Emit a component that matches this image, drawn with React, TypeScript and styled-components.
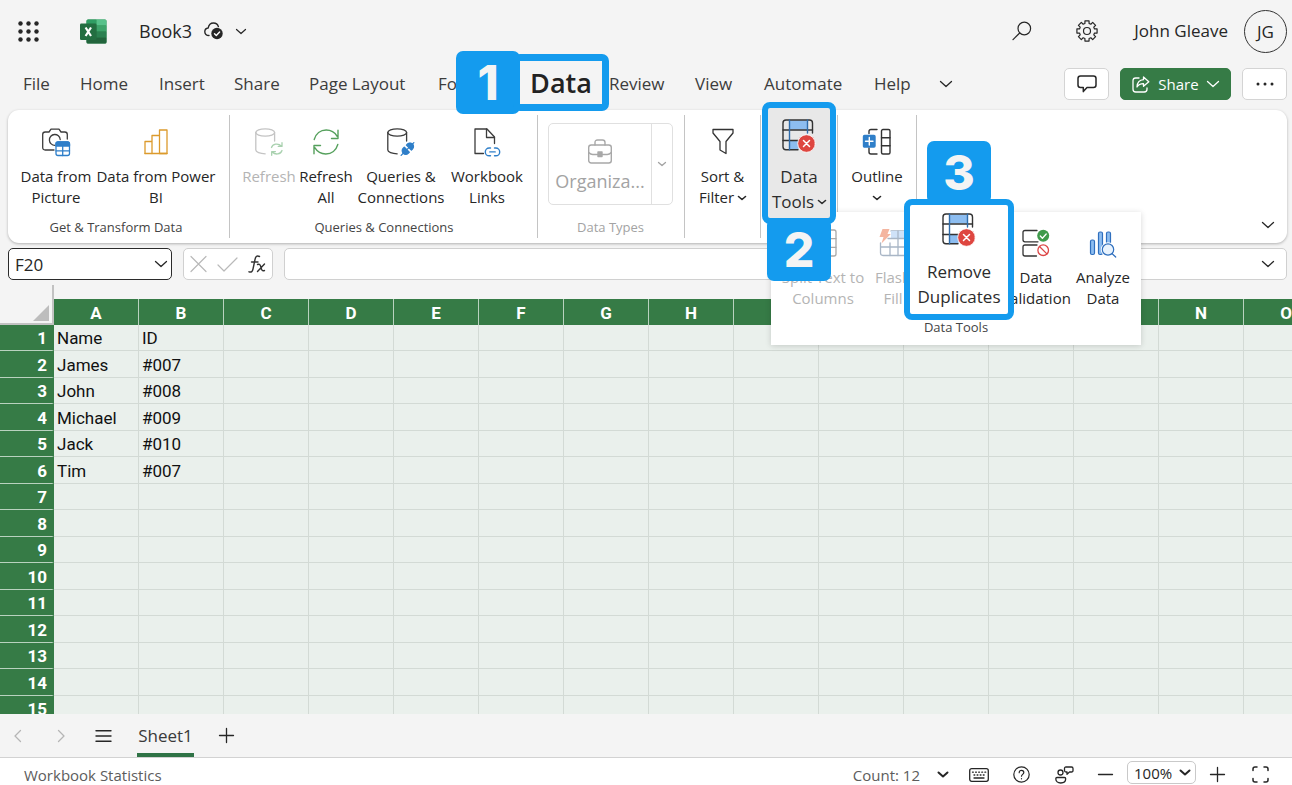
import React from "react";
import styled, { createGlobalStyle, css } from "styled-components";

const green = "#367b46";
const callout = "#149bee";
const ink = "#262626";
const muted = "#b4b4b4";

const GlobalStyle = createGlobalStyle`
  *, *::before, *::after { box-sizing: border-box; }
  body { margin: 0; background: #f4f4f4; }
  body, button, input, select { font-family: "Open Sans", "Noto Sans", sans-serif; }
  button { margin: 0; padding: 0; border: 0; background: none; color: inherit; cursor: pointer; }
  svg { display: block; flex: none; overflow: visible; }
`;

/* ---------- layout ---------- */

const Page = styled.div`
  display: flex;
  flex-direction: column;
  height: 100vh;
  overflow: hidden;
  color: ${ink};
`;

const TitleBar = styled.header`
  display: flex;
  align-items: center;
  flex: none;
  height: 62px;
  padding: 0 5px 0 18px;
`;

const Spacer = styled.div`
  flex: 1;
`;

const IconButton = styled.button<{ $gap?: number }>`
  display: flex;
  align-items: center;
  justify-content: center;
  margin-right: ${(p) => p.$gap ?? 0}px;
`;

const Logo = styled.a`
  display: block;
  margin-right: 32px;
`;

const BookName = styled.button`
  display: flex;
  align-items: center;
  gap: 12px;
  font-size: 18px;
  line-height: 24px;
`;

const UserName = styled.span`
  font-size: 17px;
  line-height: 24px;
  margin-right: 16px;
`;

const Avatar = styled.button`
  width: 43px;
  height: 43px;
  border: 1px solid #333;
  border-radius: 50%;
  font-size: 17px;
`;

const TabBar = styled.nav`
  display: flex;
  align-items: center;
  flex: none;
  height: 44px;
  padding: 0 5px 0 23px;
  margin-bottom: 4px;
`;

const Tabs = styled.div`
  display: flex;
  align-items: center;
  gap: 30px;
`;

const Tab = styled.button<{ $w: number }>`
  position: relative;
  width: ${(p) => p.$w}px;
  height: 28px;
  font-size: 17px;
  line-height: 28px;
  color: #3c3c3c;
  text-align: left;
  white-space: nowrap;
`;

const BarButton = styled.button<{ $w: number; $primary?: boolean }>`
  display: flex;
  align-items: center;
  justify-content: center;
  gap: 8px;
  width: ${(p) => p.$w}px;
  height: 32px;
  margin-left: 11px;
  border: 1px solid #d4d4d4;
  border-radius: 5px;
  background: #fff;
  font-size: 15px;
  ${(p) =>
    p.$primary &&
    css`
      border-color: ${green};
      background: ${green};
      color: #fff;
    `}
`;

/* ---------- numbered callouts ---------- */

const Badge = styled.span`
  display: flex;
  align-items: center;
  justify-content: center;
  width: 64px;
  height: 63px;
  border-radius: 7px;
  background: ${callout};
  color: #f4f4f4;
  font: 800 48px/63px Inter, sans-serif;
`;

const DataSpot = styled.span`
  position: absolute;
  left: -82px;
  top: -19px;
  z-index: 3;
  display: flex;
  align-items: center;
`;

const DataFrame = styled.span`
  display: flex;
  align-items: center;
  justify-content: center;
  width: 96px;
  height: 57px;
  margin-left: -7px;
  border: 7px solid ${callout};
  border-radius: 7px;
  background: #f4f4f4;
  color: #222;
  font-size: 27px;
  font-weight: 600;
`;

const SpotButton = styled.button<{ $fill: string }>`
  display: flex;
  flex-direction: column;
  align-items: center;
  border: 6px solid ${callout};
  border-radius: 8px;
  background: ${(p) => p.$fill};
  color: #2c2c2c;
  line-height: 25px;
  white-space: nowrap;
`;

const ToolsSpot = styled.div`
  position: absolute;
  left: 1px;
  top: -13px;
  z-index: 3;
  display: flex;
  flex-direction: column;
  align-items: center;

  ${SpotButton} {
    width: 74px;
    height: 122px;
    padding-top: 11px;
    gap: 11px;
    font-size: 17px;
  }
  ${Badge} {
    margin-top: -6px;
  }
`;

const RemoveSpot = styled.div`
  position: absolute;
  left: -12px;
  top: -75px;
  z-index: 2;
  display: flex;
  flex-direction: column;
  align-items: center;

  ${SpotButton} {
    width: 110px;
    height: 121px;
    margin-top: -5px;
    padding-top: 8px;
    gap: 12px;
    font-size: 17px;
  }
`;

/* ---------- ribbon ---------- */

const Ribbon = styled.section`
  position: relative;
  z-index: 2;
  display: flex;
  flex: none;
  height: 133px;
  margin: 0 5px 5px 8px;
  padding: 5px 0;
  border-radius: 11px;
  background: #fff;
  box-shadow: 0 1px 3px rgba(0, 0, 0, 0.28);
`;

const Group = styled.div<{ $pad?: string }>`
  position: relative;
  display: flex;
  flex-direction: column;
  padding: ${(p) => p.$pad ?? "0"};
  border-right: 1px solid #c4c4c4;
`;

const Row = styled.div`
  display: flex;
  flex: 1;
`;

const Tool = styled.button<{ $w: number }>`
  position: relative;
  display: flex;
  flex-direction: column;
  align-items: center;
  gap: 10px;
  width: ${(p) => p.$w}px;
  padding-top: 13px;
  font-size: 15px;
  line-height: 21px;
  white-space: nowrap;
  color: ${ink};
  &:disabled {
    color: ${muted};
    cursor: default;
  }
`;

const Line = styled.span`
  display: flex;
  align-items: center;
  justify-content: center;
  gap: 4px;
  min-height: 21px;
`;

const GroupLabel = styled.div<{ $dim?: boolean }>`
  height: 19px;
  font-size: 13px;
  line-height: 16px;
  text-align: center;
  white-space: nowrap;
  color: ${(p) => (p.$dim ? "#a3a3a3" : "#444")};
`;

const TypesBox = styled.div`
  display: flex;
  width: 125px;
  height: 82px;
  margin-top: 8px;
  border: 1px solid #e0e0e0;
  border-radius: 5px;
`;

const TypesMain = styled.button`
  display: flex;
  flex: 1;
  flex-direction: column;
  align-items: center;
  justify-content: center;
  gap: 5px;
  padding-top: 4px;
  border-right: 1px solid #e0e0e0;
  font-size: 18px;
  line-height: 24px;
  color: #a3a3a3;
`;

const TypesMore = styled.button`
  display: flex;
  align-items: center;
  justify-content: center;
  width: 20px;
  color: #a3a3a3;
`;

const Collapse = styled.button`
  align-self: flex-end;
  margin: 0 13px 10px auto;
`;

const Flyout = styled.div`
  position: absolute;
  left: 10px;
  top: 97px;
  z-index: 2;
  width: 370px;
  height: 133px;
  padding: 4px 5px 7px;
  display: flex;
  flex-direction: column;
  background: #fff;
  box-shadow: 0 1px 6px rgba(0, 0, 0, 0.16);
`;

/* ---------- formula bar ---------- */

const FormulaRow = styled.section`
  display: flex;
  flex: none;
  gap: 11px;
  height: 32px;
  margin: 0 5px 5px 8px;
`;

const Field = styled.div<{ $w?: number; $strong?: boolean }>`
  display: flex;
  align-items: center;
  flex: ${(p) => (p.$w ? "none" : "1")};
  width: ${(p) => (p.$w ? `${p.$w}px` : "auto")};
  padding: 0 ${(p) => (p.$strong ? 4 : 12)}px 0 6px;
  border: 1px solid ${(p) => (p.$strong ? "#2b2b2b" : "#d0d0d0")};
  border-radius: 5px;
  background: #fff;

  input {
    flex: 1;
    min-width: 0;
    padding: 0;
    border: 0;
    outline: 0;
    background: none;
    font-size: 17px;
    color: ${ink};
  }
`;

const FormulaTools = styled(Field)`
  justify-content: space-between;
  padding: 0 6px;
`;

/* ---------- sheet ---------- */

const SheetArea = styled.main`
  flex: 1;
  min-height: 0;
  padding-top: 14px;
  overflow: hidden;
`;

const Sheet = styled.table`
  width: 1329px;
  table-layout: fixed;
  border-collapse: separate;
  border-spacing: 0;
  font-family: Roboto, "Liberation Sans", sans-serif;
  font-size: 17px;
  line-height: 20px;
  color: #111;

  th, td { padding: 1px 0 0; }
  tr { height: 26px; }
  tbody tr:nth-child(even) { height: 27px; }
`;

const Corner = styled.th`
  position: relative;
  width: 54px;
  border-right: 2px solid #c2c2c2;
  border-bottom: 2px solid #c2c2c2;
  vertical-align: bottom;
  svg { margin: 0 3px 2px auto; }
  &::before {
    content: "";
    position: absolute;
    right: -2px;
    bottom: 100%;
    width: 2px;
    height: 14px;
    background: #c2c2c2;
  }
`;

const ColHead = styled.th`
  border-right: 1px solid #b9d2bf;
  background: ${green};
  color: #fff;
  font-weight: 700;
`;

const RowHead = styled.th`
  && { padding-right: 5px; }
  border-right: 2px solid ${green};
  border-bottom: 1px solid #b9d2bf;
  background: ${green};
  color: #fff;
  font-weight: 700;
  text-align: right;
`;

const Cell = styled.td`
  && { padding-left: 3px; }
  border-right: 1px solid #d3dad5;
  border-bottom: 1px solid #d3dad5;
  background: #eaf0ec;
  white-space: nowrap;
`;

/* ---------- bottom bars ---------- */

const SheetBar = styled.nav`
  display: flex;
  align-items: center;
  flex: none;
  height: 43px;
  padding-left: 14px;
  background: #f4f4f4;
`;

const SheetTab = styled.button`
  align-self: stretch;
  width: 57px;
  margin: 0 25px;
  padding-top: 3px;
  border-bottom: 4px solid #2f7346;
  font-size: 17px;
  font-weight: 500;
  color: #3a3a3a;
`;

const StatusBar = styled.footer`
  display: flex;
  align-items: center;
  flex: none;
  height: 28px;
  padding: 6px 23px 0 24px;
  border-top: 1px solid #d2d2d2;
  background: #fff;
  font-size: 15px;
  line-height: 20px;
  color: #5c5c5c;
`;

const StatusItem = styled.button<{ $gap: number }>`
  display: flex;
  align-items: center;
  gap: 18px;
  margin-left: ${(p) => p.$gap}px;
  font-size: 15px;
  color: ${ink};
`;

const Count = styled.span`
  color: #5c5c5c;
`;

const Zoom = styled.label`
  display: grid;
  align-items: center;
  width: 69px;
  height: 23px;
  margin: -4px 0 0 14px;
  color: ${ink};

  select, svg { grid-area: 1 / 1; }
  svg { justify-self: end; margin-right: 6px; pointer-events: none; }
  select {
    width: 69px;
    height: 23px;
    padding: 0 0 0 6px;
    border: 1px solid #c9c9c9;
    border-radius: 5px;
    background: #fff;
    appearance: none;
    font-size: 15px;
    color: ${ink};
  }
`;

/* ---------- icons ---------- */

type IconProps = {
  w: number;
  h: number;
  color?: string;
  sw?: number;
  children: React.ReactNode;
};

const Icon = ({ w, h, color = "currentColor", sw = 1.3, children }: IconProps) => (
  <svg
    width={w}
    height={h}
    viewBox={`0 0 ${w} ${h}`}
    fill="none"
    stroke={color}
    strokeWidth={sw}
    strokeLinecap="round"
    strokeLinejoin="round"
    aria-hidden="true"
  >
    {children}
  </svg>
);

const Chevron = ({ w = 12, sw = 1.3 }: { w?: number; sw?: number }) => (
  <Icon w={w} h={w / 2} sw={sw}>
    <path d={`M.5 .5 L${w / 2} ${w / 2 - 0.5} L${w - 0.5} .5`} />
  </Icon>
);

const AppsIcon = () => (
  <Icon w={21} h={21}>
    <g fill={ink} stroke="none">
      {[2.5, 10.5, 18.5].map((y) =>
        [2.5, 10.5, 18.5].map((x) => <circle key={`${x}-${y}`} cx={x} cy={y} r="2.2" />)
      )}
    </g>
  </Icon>
);

const ExcelLogo = () => (
  <Icon w={27} h={25}>
    <g stroke="none">
      <rect x="6.5" y="0.5" width="20" height="24" rx="1.5" fill="#2f8a50" />
      <path d="M6.5 6.5V2q0-1.500 1.500-1.500H16.500V6.500z" fill="#2f9d63" />
      <path d="M16.500 .5H25q1.500 0 1.500 1.500V6.500H16.500z" fill="#57c18a" />
      <rect x="6.500" y="6.500" width="10" height="6" fill="#287d49" />
      <rect x="16.500" y="6.500" width="10" height="6" fill="#3da36a" />
      <rect x="6.500" y="12.500" width="10" height="6" fill="#235f3b" />
      <rect x="16.500" y="12.500" width="10" height="6" fill="#2b8050" />
      <path d="M6.500 18.500h20V23q0 1.500-1.500 1.500H8q-1.500 0-1.500-1.500z" fill="#22643c" />
      <rect x="0" y="4.500" width="16.500" height="16.500" rx="1.300" fill="#236e41" />
    </g>
    <path d="M5.600 8.500l5.400 8.500M11 8.500l-5.400 8.500" stroke="#fff" strokeWidth="2.200" strokeLinecap="butt" />
  </Icon>
);

const CloudIcon = () => (
  <Icon w={20} h={18} color={ink} sw={1.4}>
    <path d="M5 13.500C2.300 13.500 .8 11.800 .8 9.700c0-2 1.500-3.500 3.400-3.700C4.700 3 6.700 1 9.500 1c2.400 0 4.200 1.400 4.900 3.600" />
    <circle cx="13" cy="11.500" r="5.700" fill={ink} stroke="none" />
    <path d="M10.500 11.700l1.800 1.800 3.300-3.500" stroke="#fff" />
  </Icon>
);

const SearchIcon = () => (
  <Icon w={20} h={20} color={ink} sw={1.2}>
    <circle cx="12.300" cy="7.500" r="6.300" />
    <path d="M7.700 12L1 18.700" />
  </Icon>
);

const gearPath = (() => {
  const pts: string[] = [];
  for (let i = 0; i < 8; i++) {
    const base = (i * Math.PI) / 4 - Math.PI / 2;
    [
      [-0.27, 7.8],
      [-0.2, 10.3],
      [0.2, 10.3],
      [0.27, 7.8],
    ].forEach(([a, r]) => {
      pts.push(`${(11 + r * Math.cos(base + a)).toFixed(2)} ${(11 + r * Math.sin(base + a)).toFixed(2)}`);
    });
  }
  return `M${pts.join("L")}Z`;
})();

const GearIcon = () => (
  <Icon w={22} h={22} color={ink} sw={1.2}>
    <path d={gearPath} />
    <circle cx="11" cy="11" r="3.500" />
  </Icon>
);

const CommentIcon = () => (
  <Icon w={20} h={18} color={ink} sw={1.5}>
    <path d="M3.500 1h13q2.500 0 2.500 2.500V10q0 2.500-2.500 2.500H10L6.300 16.600V12.500H3.500Q1 12.500 1 10V3.500Q1 1 3.500 1z" />
  </Icon>
);

const ShareIcon = () => (
  <Icon w={18} h={17} sw={1.3}>
    <path d="M7 2H3.700Q1 2 1 4.700v8.500Q1 16 3.700 16h8.500q2.800 0 2.800-2.800V12" />
    <path d="M11.500 1l5.300 4.700-5.300 4.600V7.600C8.500 7.500 6.500 8.600 5 11c.2-4 2.200-7 6.500-7.300z" />
  </Icon>
);

const DotsIcon = () => (
  <Icon w={20} h={4}>
    <g fill={ink} stroke="none">
      <circle cx="3" cy="2" r="1.500" />
      <circle cx="10" cy="2" r="1.500" />
      <circle cx="17" cy="2" r="1.500" />
    </g>
  </Icon>
);

const CameraIcon = () => (
  <Icon w={28} h={28} color="#3c3c3c">
    <path d="M12 22H3.200Q.7 22 .7 19.500V6.500Q.7 4 3.200 4H7l2-2.800h8L19 4h3.800Q25.300 4 25.300 6.500V11" />
    <path d="M13 17.300A5.400 5.400 0 1 1 18.200 11.500" />
    <rect x="14" y="14" width="13.500" height="13.500" rx="2" fill="#fff" stroke="#2f7fc9" />
    <path d="M14 18V16q0-2 2-2h9.500q2 0 2 2v2z" fill="#2f7fc9" stroke="#2f7fc9" />
    <path d="M20.700 18v9.500M14 22.800h13.500" stroke="#2f7fc9" />
  </Icon>
);

const PowerBiIcon = () => (
  <Icon w={24} h={28} color="#dc9a2c" sw={1.3}>
    <path d="M1 25.500V13.500h7M8 25.500V7.500h7.500M15.500 25.500V2H23v23.500z" />
    <path d="M1 25.500h22" />
  </Icon>
);

const Cylinder = ({ color, sw = 1.3 }: { color: string; sw?: number }) => (
  <g stroke={color} strokeWidth={sw}>
    <ellipse cx="10.200" cy="4.500" rx="9.400" ry="3.700" />
    <path d="M.8 4.500V22c0 2.100 4.200 3.800 9.400 3.800M19.600 4.500V13" />
  </g>
);

const RefreshIcon = () => (
  <Icon w={28} h={28}>
    <Cylinder color="#c4c4c4" />
    <g stroke="#a9d1af">
      <path d="M16.500 19.500c1-3.500 6.500-5 10-1.300M27 14.700v3.700h-3.700M27 22.500c-1.300 4-6.800 4.600-9.700 1.500M16.700 27.300v-3.700h3.700" />
    </g>
  </Icon>
);

const RefreshAllIcon = () => (
  <Icon w={26} h={28} color="#55a05c" sw={1.4}>
    <path d="M1.200 11.500C2.800 5.800 7.500 2 13.200 2c4.500 0 8.500 2.200 11 6.300M25 2.300v8.200h-6.500" />
    <path d="M24.800 16.500C23.200 22.200 18.500 26 12.800 26c-4.500 0-8.500-2.200-11-6.300M1 25.700v-8.200h6.500" />
  </Icon>
);

const QueriesIcon = () => (
  <Icon w={28} h={28}>
    <Cylinder color="#3c3c3c" />
    <g transform="rotate(-45 20.500 21)" stroke="#2f7fc9">
      <path d="M11.500 21h18" />
      <path d="M19.500 17.500v7h-1.500a3.500 3.500 0 0 1 0-7z" fill="#2f7fc9" />
      <path d="M22.500 17.500v7h1.500a3.500 3.500 0 0 0 0-7z" fill="#2f7fc9" />
    </g>
  </Icon>
);

const LinksIcon = () => (
  <Icon w={26} h={28} color="#3c3c3c">
    <path d="M9.500 25.500H1V1h12l7.500 8v6.500" />
    <path d="M12.500 1v8.500h8" />
    <g stroke="#2f7fc9" strokeWidth="1.400">
      <path d="M16.500 20h-1.300a3.900 3.900 0 0 0 0 7.800h1.300M20.500 20h1.300a3.900 3.900 0 0 1 0 7.800h-1.300M15.800 23.900h5.400" />
    </g>
  </Icon>
);

const CaseIcon = () => (
  <Icon w={24} h={25} color="#a8a8a8" sw={1.4}>
    <rect x=".7" y="6" width="22.600" height="18" rx="2.500" />
    <path d="M7 6V3.500Q7 1 9.500 1h5Q17 1 17 3.500V6M.7 13.500q2 2 4 2h14.600q2 0 4-2" />
    <rect x="10" y="13" width="4" height="4.500" fill="#a8a8a8" />
  </Icon>
);

const FilterIcon = () => (
  <Icon w={22} h={28} color="#333" sw={1.3}>
    <path d="M1 1.500h20V5L14 13.500V25.500L8 22V13.500L1 5z" />
  </Icon>
);

const OutlineIcon = () => (
  <Icon w={28} h={28} color="#333" sw={1.4}>
    <path d="M6 5.500V3.500Q6 1.500 8 1.500h6M6 20v4q0 2 2 2h6" />
    <rect x="18.500" y="1.500" width="8.500" height="24.500" rx="1.500" />
    <path d="M18.500 9.700H27M18.500 17.800H27" />
    <rect x=".5" y="7.500" width="11.500" height="11.500" rx="1" fill="#2f7fc9" stroke="#2f7fc9" />
    <path d="M6.300 9.500v7.500M2.500 13.200H10" stroke="#fff" />
  </Icon>
);

const RemoveIcon = () => (
  <Icon w={34} h={34} color="#333" sw={1.4}>
    <path d="M7.500 1.500h18v9h-18z M7.500 22h9v8.500h-9z" fill="#8dbdf0" stroke="none" />
    <path d="M16 30.800H4q-3 0-3-3V4q0-3 3-3h23.500q3 0 3 3V14" />
    <path d="M1 11h29.500M1 21.500h15" />
    <path d="M7.500 1v29.800M25.500 1v13" stroke="#2f6cab" />
    <circle cx="24.500" cy="24.500" r="8.800" fill="#de4640" stroke="#fff" strokeWidth=".8" />
    <path d="M21.500 21.500l6 6M27.500 21.500l-6 6" stroke="#fff" strokeWidth="1.500" />
  </Icon>
);

const GridIcon = () => (
  <Icon w={28} h={28} color="#a9a9a9">
    <rect x="1" y="1" width="26" height="26" rx="2" />
    <path d="M1 9.700h26M1 18.300h26M9.700 1v26M18.300 1v26" />
  </Icon>
);

const FlashIcon = () => (
  <Icon w={28} h={28} color="#a9b6c6">
    <path d="M12 2h15v24.500H4q-2.500 0-2.500-2.500V14" />
    <path d="M12 2h15v7.500H12z" fill="#cfe2f8" stroke="none" />
    <path d="M9 9.500h18M2 18h25M11 14v12.500M19 2v24.500" />
    <path d="M3.500 0h7L8.500 5h3.300L2.500 14.500 4.500 8H.5z" fill="#f4b5a0" stroke="none" />
  </Icon>
);

const ValidationIcon = () => (
  <Icon w={28} h={28} color="#333">
    <path d="M15 1.500H3Q1 1.500 1 3.500v7.300q0 2 2 2h13M15 16H3q-2 0-2 2v7q0 2 2 2h11.500" />
    <circle cx="21.200" cy="6.800" r="6" fill="#3f9a4b" stroke="none" />
    <path d="M18.300 7l2.100 2.200 3.800-4.200" stroke="#fff" />
    <circle cx="21.200" cy="21.200" r="5.300" stroke="#dc4646" />
    <path d="M17.500 17.500l7.400 7.400" stroke="#dc4646" />
  </Icon>
);

const AnalyzeIcon = () => (
  <Icon w={28} h={28} color="#2f6fbe" sw={1.2}>
    <g fill="#8dbdf0">
      <rect x="1.500" y="11" width="4" height="14.500" rx="1.500" />
      <rect x="9.500" y="3" width="4" height="22.500" rx="1.500" />
      <rect x="17.500" y="3" width="4" height="12" rx="1.500" />
    </g>
    <circle cx="19" cy="20.500" r="5.700" fill="#fff" stroke="#fff" strokeWidth="3" />
    <circle cx="19" cy="20.500" r="5.700" fill="#e9f3fd" />
    <path d="M23.200 24.700l3.500 3.300" />
  </Icon>
);

const FxIcon = () => (
  <Icon w={18} h={18} color="#333" sw={1.4}>
    <path d="M11.500 1.500C8.500 0 7.500 2 7 4.500L5 14c-.5 2.500-1.500 3.500-4 2.800M3.500 7h6.500" />
    <path d="M9.500 9.500c2.500-1 3 1 3.500 3s1 4 3.500 3M16.500 9l-7 7.500" />
  </Icon>
);

const KeyboardIcon = () => (
  <Icon w={20} h={14} color={ink}>
    <rect x=".7" y=".7" width="18.600" height="12.600" rx="2" />
    <path d="M3.500 4.200h.8M6.600 4.200h.8M9.700 4.200h.8M12.800 4.200h.8M15.900 4.200h.8M5 7h.8M8.100 7h.8M11.200 7h.8M14.300 7h.8M5 10h10" />
  </Icon>
);

const HelpIcon = () => (
  <Icon w={17} h={17} color={ink} sw={1.2}>
    <circle cx="8.500" cy="8.500" r="7.700" />
    <path d="M6.200 6.700C6.200 5.200 7.200 4.300 8.500 4.300s2.300.9 2.300 2.200c0 1.800-2.300 2-2.300 3.700M8.500 12.600v.2" />
  </Icon>
);

const FeedbackIcon = () => (
  <Icon w={20} h={18} color={ink} sw={1.3}>
    <circle cx="6.500" cy="6.500" r="2.500" />
    <path d="M3 11.500h7.500q1.200 0 1.200 1.300c0 2.500-2 4.200-5 4.200s-4.900-1.700-4.900-4.200q0-1.300 1.200-1.300z" />
    <path d="M12 1h5.500q1.500 0 1.500 1.500v2Q19 6 17.500 6H15.500L13 8.200V6h-1q-1.500 0-1.500-1.500v-2Q10.500 1 12 1z" />
  </Icon>
);

const FullIcon = () => (
  <Icon w={17} h={17} color={ink} sw={1.5}>
    <path d="M1 4.500V3q0-2 2-2h2M12 1h2q2 0 2 2v1.500M16 12.500V14q0 2-2 2h-2M5 16H3q-2 0-2-2v-1.500" />
  </Icon>
);

/* ---------- content ---------- */

const columns = "ABCDEFGHIJKLMNO".split("");
const records = [
  ["Name", "ID"],
  ["James", "#007"],
  ["John", "#008"],
  ["Michael", "#009"],
  ["Jack", "#010"],
  ["Tim", "#007"],
];
const rowNumbers = Array.from({ length: 15 }, (_, i) => i + 1);

export default function App() {
  return (
    <>
      <GlobalStyle />
      <Page>
        <TitleBar>
          <IconButton $gap={41} aria-label="App launcher">
            <AppsIcon />
          </IconButton>
          <Logo href="#" aria-label="Excel">
            <ExcelLogo />
          </Logo>
          <BookName>
            Book3
            <CloudIcon />
            <Chevron w={10} sw={1.2} />
          </BookName>
          <Spacer />
          <IconButton $gap={44} aria-label="Search">
            <SearchIcon />
          </IconButton>
          <IconButton $gap={36} aria-label="Settings">
            <GearIcon />
          </IconButton>
          <UserName>John Gleave</UserName>
          <Avatar>JG</Avatar>
        </TitleBar>

        <TabBar>
          <Tabs>
            <Tab $w={27}>File</Tab>
            <Tab $w={49}>Home</Tab>
            <Tab $w={45}>Insert</Tab>
            <Tab $w={45}>Share</Tab>
            <Tab $w={99}>Page Layout</Tab>
            <Tab $w={70}>Formulas</Tab>
            <Tab $w={41}>
              <DataSpot>
                <Badge>1</Badge>
                <DataFrame>Data</DataFrame>
              </DataSpot>
            </Tab>
            <Tab $w={56}>Review</Tab>
            <Tab $w={39}>View</Tab>
            <Tab $w={80}>Automate</Tab>
            <Tab $w={36}>Help</Tab>
            <IconButton aria-label="More tabs">
              <Chevron />
            </IconButton>
          </Tabs>
          <Spacer />
          <BarButton $w={45} aria-label="Comments">
            <CommentIcon />
          </BarButton>
          <BarButton $w={111} $primary>
            <ShareIcon />
            Share
            <Chevron />
          </BarButton>
          <BarButton $w={45} aria-label="More options">
            <DotsIcon />
          </BarButton>
        </TabBar>

        <Ribbon>
          <Group $pad="0 13px 0 8px">
            <Row>
              <Tool $w={80}>
                <CameraIcon />
                <span>Data from<br />Picture</span>
              </Tool>
              <Tool $w={120}>
                <PowerBiIcon />
                <span>Data from Power<br />BI</span>
              </Tool>
            </Row>
            <GroupLabel>Get &amp; Transform Data</GroupLabel>
          </Group>
          <Group $pad="0 10px 0 11px">
            <Row>
              <Tool $w={56} disabled>
                <RefreshIcon />
                Refresh
              </Tool>
              <Tool $w={58}>
                <RefreshAllIcon />
                <span>Refresh<br />All</span>
              </Tool>
              <Tool $w={92}>
                <QueriesIcon />
                <span>Queries &amp;<br />Connections</span>
              </Tool>
              <Tool $w={80}>
                <LinksIcon />
                <span>Workbook<br />Links</span>
              </Tool>
            </Row>
            <GroupLabel>Queries &amp; Connections</GroupLabel>
          </Group>
          <Group $pad="0 11px 0 10px">
            <Row>
              <TypesBox>
                <TypesMain>
                  <CaseIcon />
                  Organiza...
                </TypesMain>
                <TypesMore aria-label="More data types">
                  <Chevron w={8} />
                </TypesMore>
              </TypesBox>
            </Row>
            <GroupLabel $dim>Data Types</GroupLabel>
          </Group>
          <Group>
            <Tool $w={75}>
              <FilterIcon />
              <span>
                Sort &amp;
                <Line>
                  Filter <Chevron w={8} sw={1.6} />
                </Line>
              </span>
            </Tool>
          </Group>
          <Group $pad="0 38px">
            <ToolsSpot>
              <SpotButton $fill="#e8e8e8">
                <RemoveIcon />
                <span>
                  Data
                  <Line>
                    Tools <Chevron w={8} sw={1.6} />
                  </Line>
                </span>
              </SpotButton>
              <Badge>2</Badge>
            </ToolsSpot>
            <Flyout>
              <Row>
                <Tool $w={94} disabled>
                  <GridIcon />
                  <span>Split Text to<br />Columns</span>
                </Tool>
                <Tool $w={46} disabled>
                  <FlashIcon />
                  <span>Flash<br />Fill</span>
                </Tool>
                <Tool as="div" $w={86}>
                  <RemoveSpot>
                    <Badge>3</Badge>
                    <SpotButton $fill="#fff">
                      <RemoveIcon />
                      <span>Remove<br />Duplicates</span>
                    </SpotButton>
                  </RemoveSpot>
                </Tool>
                <Tool $w={68}>
                  <ValidationIcon />
                  <span>Data<br />Validation</span>
                </Tool>
                <Tool $w={66}>
                  <AnalyzeIcon />
                  <span>Analyze<br />Data</span>
                </Tool>
              </Row>
              <GroupLabel>Data Tools</GroupLabel>
            </Flyout>
          </Group>
          <Group>
            <Tool $w={78}>
              <OutlineIcon />
              <span>
                Outline
                <Line>
                  <Chevron w={8} sw={1.6} />
                </Line>
              </span>
            </Tool>
          </Group>
          <Collapse aria-label="Collapse ribbon">
            <Chevron />
          </Collapse>
        </Ribbon>

        <FormulaRow>
          <Field $w={164} $strong>
            <input aria-label="Name box" defaultValue="F20" />
            <IconButton aria-label="Open name list">
              <Chevron />
            </IconButton>
          </Field>
          <FormulaTools $w={90}>
            <IconButton aria-label="Cancel">
              <Icon w={17} h={16} color="#b9b9b9" sw={1.2}>
                <path d="M1 .5l15 15M16 .5l-15 15" />
              </Icon>
            </IconButton>
            <IconButton aria-label="Enter">
              <Icon w={21} h={15} color="#b9b9b9" sw={1.2}>
                <path d="M1 8l6 6L20 1" />
              </Icon>
            </IconButton>
            <IconButton aria-label="Insert function">
              <FxIcon />
            </IconButton>
          </FormulaTools>
          <Field>
            <input aria-label="Formula" />
            <IconButton aria-label="Expand formula bar">
              <Chevron />
            </IconButton>
          </Field>
        </FormulaRow>

        <SheetArea>
          <Sheet>
            <thead>
              <tr>
                <Corner aria-label="Select all">
                  <Icon w={16} h={16}>
                    <path d="M16 0v16H0z" fill="#bdbdbd" stroke="none" />
                  </Icon>
                </Corner>
                {columns.map((c) => (
                  <ColHead key={c} scope="col">
                    {c}
                  </ColHead>
                ))}
              </tr>
            </thead>
            <tbody>
              {rowNumbers.map((n) => (
                <tr key={n}>
                  <RowHead scope="row">{n}</RowHead>
                  {columns.map((c, i) => (
                    <Cell key={c}>{records[n - 1]?.[i]}</Cell>
                  ))}
                </tr>
              ))}
            </tbody>
          </Sheet>
        </SheetArea>

        <SheetBar>
          <IconButton $gap={37} aria-label="Previous sheet">
            <Icon w={7} h={12} color="#b5b5b5">
              <path d="M6.500 .5L1 6l5.500 5.500" />
            </Icon>
          </IconButton>
          <IconButton $gap={30} aria-label="Next sheet">
            <Icon w={7} h={12} color="#b5b5b5">
              <path d="M.5 .5L6 6 .5 11.500" />
            </Icon>
          </IconButton>
          <IconButton aria-label="All sheets">
            <Icon w={17} h={12} sw={1.4}>
              <path d="M1 .8h15M1 6h15M1 11.200h15" />
            </Icon>
          </IconButton>
          <SheetTab>Sheet1</SheetTab>
          <IconButton aria-label="New sheet">
            <Icon w={15} h={15} sw={1.3}>
              <path d="M7.500 .5v14M.5 7.500h14" />
            </Icon>
          </IconButton>
        </SheetBar>

        <StatusBar>
          <span>Workbook Statistics</span>
          <Spacer />
          <StatusItem $gap={0}>
            <Count>Count: 12</Count>
            <Chevron w={10} sw={2} />
          </StatusItem>
          <StatusItem $gap={21} aria-label="Keyboard">
            <KeyboardIcon />
          </StatusItem>
          <StatusItem $gap={24} aria-label="Help">
            <HelpIcon />
          </StatusItem>
          <StatusItem $gap={24} aria-label="Feedback">
            <FeedbackIcon />
          </StatusItem>
          <StatusItem $gap={24} aria-label="Zoom out">
            <Icon w={15} h={15} sw={1.3}>
              <path d="M.5 7.500h14" />
            </Icon>
          </StatusItem>
          <Zoom>
            <select aria-label="Zoom" defaultValue="100%">
              <option>100%</option>
            </select>
            <Chevron w={10} sw={2} />
          </Zoom>
          <StatusItem $gap={14} aria-label="Zoom in">
            <Icon w={15} h={15} sw={1.3}>
              <path d="M7.500 .5v14M.5 7.500h14" />
            </Icon>
          </StatusItem>
          <StatusItem $gap={27} aria-label="Full screen">
            <FullIcon />
          </StatusItem>
        </StatusBar>
      </Page>
    </>
  );
}
